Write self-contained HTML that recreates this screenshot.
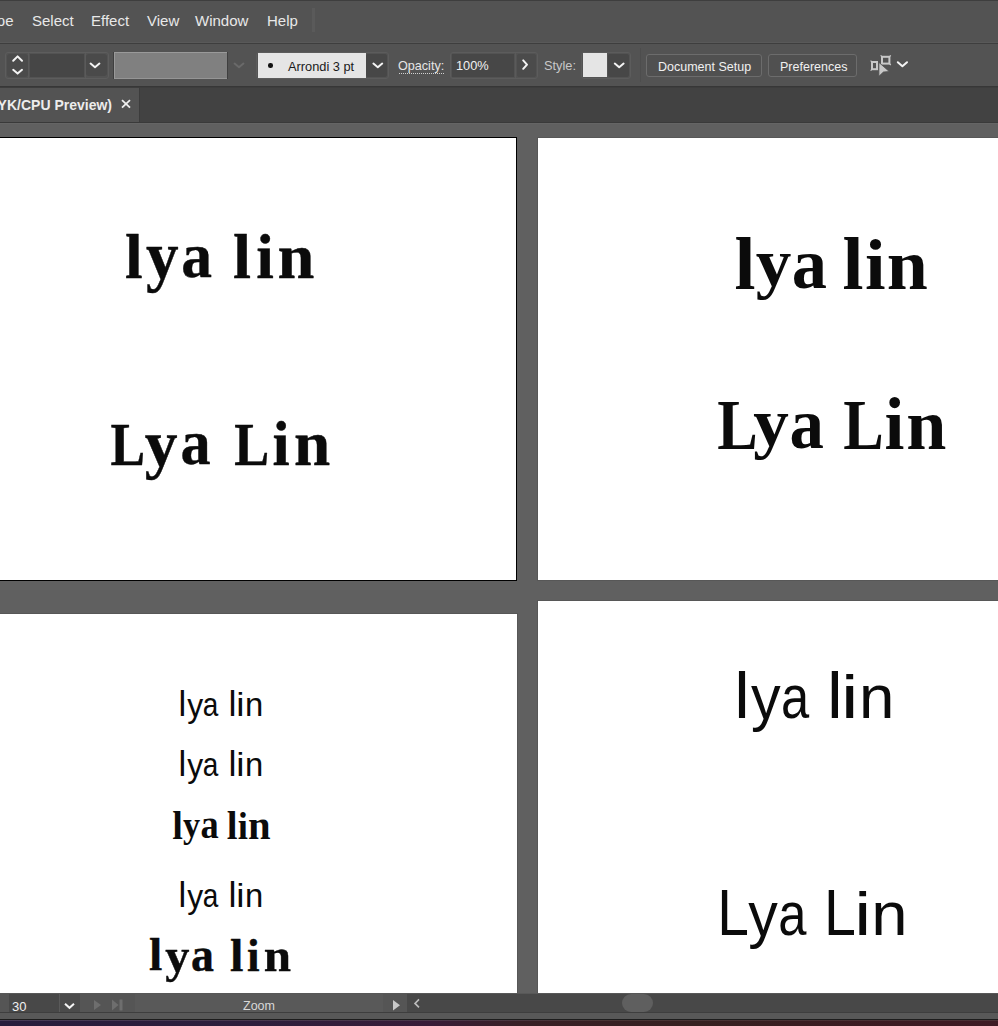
<!DOCTYPE html>
<html><head><meta charset="utf-8">
<style>
*{margin:0;padding:0;box-sizing:border-box}
html,body{width:998px;height:1026px;overflow:hidden;background:#606060;font-family:"Liberation Sans",sans-serif}
.a{position:absolute}
.ui{color:#e8e8e8;font-size:15px;white-space:nowrap}
</style></head><body>
<!-- menu bar -->
<div class="a" style="left:0;top:0;width:998px;height:43px;background:#535353;border-top:1px solid #3e3e3e"></div>
<div class="a" style="left:0;top:42px;width:998px;height:1px;background:#595959"></div>
<div class="a ui" style="left:-19px;top:12px">Type</div>
<div class="a ui" style="left:32px;top:12px">Select</div>
<div class="a ui" style="left:91px;top:12px">Effect</div>
<div class="a ui" style="left:147px;top:12px">View</div>
<div class="a ui" style="left:195px;top:12px">Window</div>
<div class="a ui" style="left:267px;top:12px">Help</div>
<div class="a" style="left:312px;top:8px;width:3px;height:24px;background:#5a5a5a"></div>

<!-- control bar -->
<div class="a" style="left:0;top:43px;width:998px;height:43px;background:#535353;border-top:1px solid #3e3e3e"></div>
<div class="a" style="left:0;top:86px;width:998px;height:1px;background:#373737"></div>
<div class="a" style="left:0;top:87px;width:998px;height:1px;background:#3d3d3d"></div>
<!-- group 1 -->
<div class="a" style="left:5px;top:52px;width:104px;height:27px;border:1px solid #5d5d5d;border-radius:3px"></div>
<div class="a" style="left:7px;top:54px;width:21px;height:23px;background:#4b4b4b;border-radius:3px"></div>
<div class="a" style="left:30px;top:54px;width:54px;height:23px;background:#464646"></div>
<div class="a" style="left:28px;top:53px;width:1px;height:25px;background:#5a5a5a"></div>
<div class="a" style="left:85px;top:53px;width:1px;height:25px;background:#5a5a5a"></div>
<div class="a" style="left:86px;top:54px;width:21px;height:22px;background:#4a4a4a;border-radius:3px"></div>

<!-- gray field -->
<div class="a" style="left:113px;top:52px;width:115px;height:27px;background:#3f3f3f"></div>
<div class="a" style="left:114px;top:52px;width:113px;height:27px;background:#808080"></div>
<div class="a" style="left:114px;top:52px;width:113px;height:1px;background:#9a9a9a"></div>
<div class="a" style="left:114px;top:78px;width:113px;height:1px;background:#959595"></div>
<div class="a" style="left:114px;top:52px;width:1px;height:27px;background:#999"></div>
<!-- stroke box -->
<div class="a" style="left:256px;top:52px;width:133px;height:27px;border:1px solid #5c5c5c;border-radius:3px"></div>
<div class="a" style="left:258px;top:53px;width:108px;height:25px;background:#e5e5e5"></div>
<div class="a" style="left:268px;top:63px;width:4.5px;height:4.5px;border-radius:50%;background:#111"></div>
<div class="a" style="left:288px;top:58.5px;font-size:12.8px;color:#1a1a1a;white-space:nowrap">Arrondi 3 pt</div>
<div class="a" style="left:366px;top:54px;width:21px;height:23px;background:#474747;border-radius:2px"></div>
<!-- opacity -->
<div class="a" style="left:398px;top:58.5px;font-size:12.6px;color:#e6e6e6;white-space:nowrap">Opacity:</div>
<div class="a" style="left:399px;top:73px;width:45px;height:0;border-top:1px dotted #d0d0d0"></div>
<div class="a" style="left:450px;top:52px;width:88px;height:27px;border:1px solid #5c5c5c;border-radius:3px"></div>
<div class="a" style="left:452px;top:54px;width:62px;height:23px;background:#474747"></div>
<div class="a" style="left:456px;top:57.5px;font-size:12.8px;color:#f0f0f0;white-space:nowrap">100%</div>
<div class="a" style="left:515px;top:53px;width:1px;height:25px;background:#5a5a5a"></div>
<div class="a" style="left:517px;top:54px;width:19px;height:23px;background:#4b4b4b;border-radius:2px"></div>
<!-- style -->
<div class="a" style="left:544px;top:57.5px;font-size:12.8px;color:#c8c8c8;white-space:nowrap">Style:</div>
<div class="a" style="left:581px;top:52px;width:50px;height:27px;border:1px solid #5c5c5c;border-radius:3px"></div>
<div class="a" style="left:583px;top:53px;width:24px;height:24px;background:#e5e5e5"></div>
<div class="a" style="left:608px;top:54px;width:21px;height:23px;background:#474747;border-radius:2px"></div>
<div class="a" style="left:640px;top:48px;width:1px;height:34px;background:#4d4d4d"></div>
<!-- buttons -->
<div class="a" style="left:646px;top:54px;width:116px;height:23px;border:1px solid #6c6c6c;border-radius:3px;background:#505050"></div>
<div class="a" style="left:658px;top:60px;font-size:12.5px;color:#f0f0f0;white-space:nowrap">Document Setup</div>
<div class="a" style="left:768px;top:54px;width:89px;height:23px;border:1px solid #6c6c6c;border-radius:3px;background:#505050"></div>
<div class="a" style="left:780px;top:60px;font-size:12.5px;color:#f0f0f0;white-space:nowrap">Preferences</div>
<svg class="a" style="left:0;top:43px" width="998" height="43" fill="none" stroke-linecap="round" stroke-linejoin="round">
 <g stroke="#f4f4f4" stroke-width="2">
  <polyline points="13.2,17.8 17.6,13.4 22,17.8"/>
  <polyline points="13.2,26.8 17.6,30.6 22,26.8"/>
  <polyline points="90.6,20.6 95,24.2 99.4,20.6"/>
  <polyline points="373.4,20.6 377.8,24.2 382.2,20.6"/>
  <polyline points="523.2,17.4 527,21.6 523.2,25.8"/>
  <polyline points="614.8,20.6 619.2,24.2 623.6,20.6"/>
  <polyline points="897.8,19.2 902.4,23.2 907,19.2"/>
 </g>
 <polyline points="234.6,20.6 239,24.2 243.4,20.6" stroke="#6a6a6a" stroke-width="2"/>
</svg>
<!-- arrange icon -->
<svg class="a" style="left:860px;top:45px" width="40" height="40">
 <g fill="none" stroke="#c8c8c8" stroke-width="2">
  <rect x="12" y="17" width="5" height="7.2"/>
  <rect x="22" y="11.8" width="7.4" height="6.8"/>
 </g>
 <g stroke="#c8c8c8" stroke-width="1.2">
  <line x1="10.6" y1="15.6" x2="12.4" y2="17.4"/><line x1="10.6" y1="25.6" x2="12.4" y2="23.8"/>
  <line x1="20.6" y1="10.4" x2="22.4" y2="12.2"/><line x1="30.8" y1="10.4" x2="29" y2="12.2"/><line x1="30.8" y1="20" x2="29" y2="18.2"/>
 </g>
 <polygon points="18.9,17.4 29.2,26.5 23.4,27 18.9,31.3" fill="#c8c8c8" stroke="#535353" stroke-width="0.8"/>
</svg>

<!-- tab bar -->
<div class="a" style="left:0;top:88px;width:998px;height:35px;background:#424242"></div>
<div class="a" style="left:0;top:88px;width:139px;height:34px;background:#535353"></div>
<div class="a" style="left:0;top:122px;width:998px;height:1px;background:#3a3a3a"></div>
<div class="a" style="left:139px;top:87px;width:1px;height:35px;background:#3c3c3c"></div>
<div class="a" style="right:886px;top:97px;font-size:14px;font-weight:bold;color:#ececec;white-space:nowrap">(CMYK/CPU Preview)</div>
<svg class="a" style="left:118px;top:96px" width="16" height="16"><g stroke="#f0f0f0" stroke-width="1.8" stroke-linecap="butt"><line x1="4" y1="4.2" x2="12" y2="11.6"/><line x1="12" y1="4.2" x2="4" y2="11.6"/></g></svg>

<!-- artboards -->
<div class="a" style="left:0;top:123px;width:998px;height:1px;background:#656565"></div>
<div class="a" style="left:-10px;top:137px;width:527px;height:444px;background:#fff;border:1px solid #000"></div>
<div class="a" style="left:537px;top:137px;width:470px;height:444px;background:#fff;border:1px solid #575757"></div>
<div class="a" style="left:-10px;top:613px;width:528px;height:400px;background:#fff;border:1px solid #575757"></div>
<div class="a" style="left:537px;top:600px;width:470px;height:400px;background:#fff;border:1px solid #575757"></div>

<!-- artboard text -->
<svg class="a" style="left:0;top:0" width="998" height="1026" fill="#0b0b0b">
<g font-family="Liberation Serif" font-weight="700" font-size="100">
<text transform="matrix(0.6364 0 0 0.6311 124.99 277.50)" stroke="#0b0b0b" stroke-width="0.63" stroke-linejoin="round">l</text>
<text transform="matrix(0.6515 0 0 0.6667 145.91 279.00)" stroke="#0b0b0b" stroke-width="0.61" stroke-linejoin="round">y</text>
<text transform="matrix(0.6159 0 0 0.6409 181.13 277.26)" stroke="#0b0b0b" stroke-width="0.64" stroke-linejoin="round">a</text>
<text transform="matrix(0.6488 0 0 0.6326 232.97 277.60)" stroke="#0b0b0b" stroke-width="0.62" stroke-linejoin="round">l</text>
<text transform="matrix(0.6337 0 0 0.6282 256.17 277.60)" stroke="#0b0b0b" stroke-width="0.63" stroke-linejoin="round">i</text>
<text transform="matrix(0.6628 0 0 0.6412 277.58 277.60)" stroke="#0b0b0b" stroke-width="0.61" stroke-linejoin="round">n</text>
</g>
<g font-family="Liberation Serif" font-weight="700" font-size="100">
<text transform="matrix(0.5181 0 0 0.6214 110.42 464.50)" stroke="#0b0b0b" stroke-width="0.70" stroke-linejoin="round">L</text>
<text transform="matrix(0.6556 0 0 0.6593 144.81 465.86)" stroke="#0b0b0b" stroke-width="0.61" stroke-linejoin="round">y</text>
<text transform="matrix(0.6026 0 0 0.6284 180.47 464.27)" stroke="#0b0b0b" stroke-width="0.65" stroke-linejoin="round">a</text>
<text transform="matrix(0.5230 0 0 0.6214 234.21 464.50)" stroke="#0b0b0b" stroke-width="0.70" stroke-linejoin="round">L</text>
<text transform="matrix(0.6173 0 0 0.6297 272.40 464.50)" stroke="#0b0b0b" stroke-width="0.64" stroke-linejoin="round">i</text>
<text transform="matrix(0.6512 0 0 0.6306 294.01 464.50)" stroke="#0b0b0b" stroke-width="0.62" stroke-linejoin="round">n</text>
</g>
<g font-family="Liberation Serif" font-weight="700" font-size="100">
<text transform="matrix(0.7562 0 0 0.7406 734.56 288.60)">l</text>
<text transform="matrix(0.7116 0 0 0.6696 755.66 285.84)">y</text>
<text transform="matrix(0.7042 0 0 0.7223 791.85 288.18)">a</text>
<text transform="matrix(0.7562 0 0 0.7406 842.56 288.60)">l</text>
<text transform="matrix(0.7407 0 0 0.7291 865.04 288.60)">i</text>
<text transform="matrix(0.7384 0 0 0.7282 886.68 288.60)">n</text>
</g>
<g font-family="Liberation Serif" font-weight="700" font-size="100">
<text transform="matrix(0.6069 0 0 0.7160 717.17 448.90)">L</text>
<text transform="matrix(0.7116 0 0 0.6681 753.26 445.87)">y</text>
<text transform="matrix(0.6887 0 0 0.7223 789.60 448.48)">a</text>
<text transform="matrix(0.6069 0 0 0.7160 843.17 448.90)">L</text>
<text transform="matrix(0.7160 0 0 0.7305 884.40 448.90)">i</text>
<text transform="matrix(0.7209 0 0 0.7282 906.33 448.90)">n</text>
</g>
<g font-family="Liberation Sans" font-weight="400" font-size="100">
<text transform="matrix(0.3483 0 0 0.3476 178.57 716.00)">l</text>
<text transform="matrix(0.3185 0 0 0.3370 187.14 716.69)">y</text>
<text transform="matrix(0.2796 0 0 0.3266 202.73 715.97)">a</text>
<text transform="matrix(0.3596 0 0 0.3476 228.49 716.00)">l</text>
<text transform="matrix(0.3708 0 0 0.3297 236.15 716.00)">i</text>
<text transform="matrix(0.3286 0 0 0.3271 244.93 716.00)">n</text>
</g>
<g font-family="Liberation Sans" font-weight="400" font-size="100">
<text transform="matrix(0.3483 0 0 0.3476 178.57 776.00)">l</text>
<text transform="matrix(0.3185 0 0 0.3370 187.14 776.69)">y</text>
<text transform="matrix(0.2796 0 0 0.3266 202.73 775.97)">a</text>
<text transform="matrix(0.3596 0 0 0.3476 228.49 776.00)">l</text>
<text transform="matrix(0.3708 0 0 0.3297 236.15 776.00)">i</text>
<text transform="matrix(0.3286 0 0 0.3271 244.93 776.00)">n</text>
</g>
<g font-family="Liberation Sans" font-weight="400" font-size="100">
<text transform="matrix(0.3483 0 0 0.3476 178.57 907.00)">l</text>
<text transform="matrix(0.3185 0 0 0.3370 187.14 907.69)">y</text>
<text transform="matrix(0.2796 0 0 0.3266 202.73 906.97)">a</text>
<text transform="matrix(0.3596 0 0 0.3476 228.49 907.00)">l</text>
<text transform="matrix(0.3708 0 0 0.3297 236.15 907.00)">i</text>
<text transform="matrix(0.3286 0 0 0.3271 244.93 907.00)">n</text>
</g>
<g font-family="Liberation Serif" font-weight="700" font-size="100">
<text transform="matrix(0.3843 0 0 0.3963 172.27 838.60)">l</text>
<text transform="matrix(0.3444 0 0 0.3674 183.09 836.76)">y</text>
<text transform="matrix(0.3642 0 0 0.4092 200.43 838.49)">a</text>
<text transform="matrix(0.3884 0 0 0.3963 226.76 838.60)">l</text>
<text transform="matrix(0.3663 0 0 0.3890 237.73 838.60)">i</text>
<text transform="matrix(0.4070 0 0 0.4098 247.94 838.60)">n</text>
</g>
<g font-family="Liberation Serif" font-weight="700" font-size="100">
<text transform="matrix(0.4793 0 0 0.4683 149.09 970.30)" stroke="#0b0b0b" stroke-width="0.84" stroke-linejoin="round">l</text>
<text transform="matrix(0.4834 0 0 0.4933 165.16 971.64)" stroke="#0b0b0b" stroke-width="0.82" stroke-linejoin="round">y</text>
<text transform="matrix(0.4592 0 0 0.4781 191.03 970.62)" stroke="#0b0b0b" stroke-width="0.85" stroke-linejoin="round">a</text>
<text transform="matrix(0.4835 0 0 0.4712 229.88 970.50)" stroke="#0b0b0b" stroke-width="0.84" stroke-linejoin="round">l</text>
<text transform="matrix(0.4527 0 0 0.4669 246.95 970.50)" stroke="#0b0b0b" stroke-width="0.87" stroke-linejoin="round">i</text>
<text transform="matrix(0.4903 0 0 0.4735 263.63 970.50)" stroke="#0b0b0b" stroke-width="0.83" stroke-linejoin="round">n</text>
</g>
<g font-family="Liberation Sans" font-weight="400" font-size="100">
<text transform="matrix(0.6966 0 0 0.6497 734.13 717.90)">l</text>
<text transform="matrix(0.5927 0 0 0.6304 751.08 719.19)">y</text>
<text transform="matrix(0.5068 0 0 0.6113 780.97 717.99)">a</text>
<text transform="matrix(0.7079 0 0 0.6497 827.06 717.90)">l</text>
<text transform="matrix(0.7865 0 0 0.6193 841.11 717.90)">i</text>
<text transform="matrix(0.6362 0 0 0.6097 858.90 717.90)">n</text>
</g>
<g font-family="Liberation Sans" font-weight="400" font-size="100">
<text transform="matrix(0.5692 0 0 0.6526 717.13 934.90)">L</text>
<text transform="matrix(0.5907 0 0 0.6291 748.18 936.22)">y</text>
<text transform="matrix(0.5068 0 0 0.6095 778.17 934.99)">a</text>
<text transform="matrix(0.5737 0 0 0.6526 824.10 934.90)">L</text>
<text transform="matrix(0.7640 0 0 0.6193 854.26 934.90)">i</text>
<text transform="matrix(0.6526 0 0 0.6078 871.29 934.90)">n</text>
</g>
</svg>
<!-- status bar -->
<div class="a" style="left:0;top:993px;width:998px;height:19px;background:#4a4a4a"></div>
<div class="a" style="left:0;top:993px;width:998px;height:1px;background:#585858"></div>
<div class="a" style="left:0;top:994px;width:9px;height:18px;background:#555"></div>
<div class="a" style="left:9px;top:994px;width:50px;height:18px;background:#484848"></div>
<div class="a" style="left:59px;top:994px;width:1px;height:18px;background:#5a5a5a"></div>
<div class="a" style="left:60px;top:994px;width:20px;height:18px;background:#4b4b4b"></div>
<div class="a" style="left:80px;top:994px;width:55px;height:18px;background:#555"></div>
<div class="a" style="left:135px;top:994px;width:248px;height:18px;background:#595959"></div>
<div class="a" style="left:383px;top:994px;width:24px;height:18px;background:#555"></div>
<div class="a" style="left:407px;top:994px;width:591px;height:18px;background:#484848"></div>
<div class="a" style="left:622px;top:994px;width:31px;height:18px;border-radius:9px;background:#5f5f5f"></div>
<div class="a" style="left:12px;top:999px;font-size:13px;color:#f0f0f0;white-space:nowrap">30</div>
<div class="a" style="left:243px;top:999px;font-size:12.5px;color:#d8d8d8;white-space:nowrap">Zoom</div>
<svg class="a" style="left:0;top:993px" width="998" height="20">
 <polyline points="65,10.8 69.5,14.8 74,10.8" fill="none" stroke="#f4f4f4" stroke-width="2"/>
 <polygon points="94,7 101,12 94,17" fill="#6e6e6e"/>
 <polygon points="112,6.5 118.5,12 112,17.5" fill="#6e6e6e"/>
 <rect x="119.5" y="6.5" width="3" height="11" fill="#6e6e6e"/>
 <polygon points="393,7 400,12.2 393,17.4" fill="#c8c8c8"/>
 <polyline points="419,6.4 415,10.4 419,14.4" fill="none" stroke="#bdbdbd" stroke-width="1.6"/>
</svg>
<div class="a" style="left:0;top:1012px;width:998px;height:1px;background:#3e3e3e"></div>
<div class="a" style="left:0;top:1013px;width:998px;height:6px;background:#585858"></div>
<div class="a" style="left:0;top:1019px;width:998px;height:1px;background:#1c1c1c"></div>
<div class="a" style="left:0;top:1020px;width:998px;height:6px;background:linear-gradient(90deg,#271c3c,#2d1e3c 25%,#381c38 43%,#382026 52%,#362020 70%,#3c1a22 90%,#3e1a24)"></div>
<div class="a" style="left:0;top:1020px;width:998px;height:1px;background:linear-gradient(90deg,#463a56,#4a3648 45%,#483434 60%,#4a2e34)"></div>
</body></html>
